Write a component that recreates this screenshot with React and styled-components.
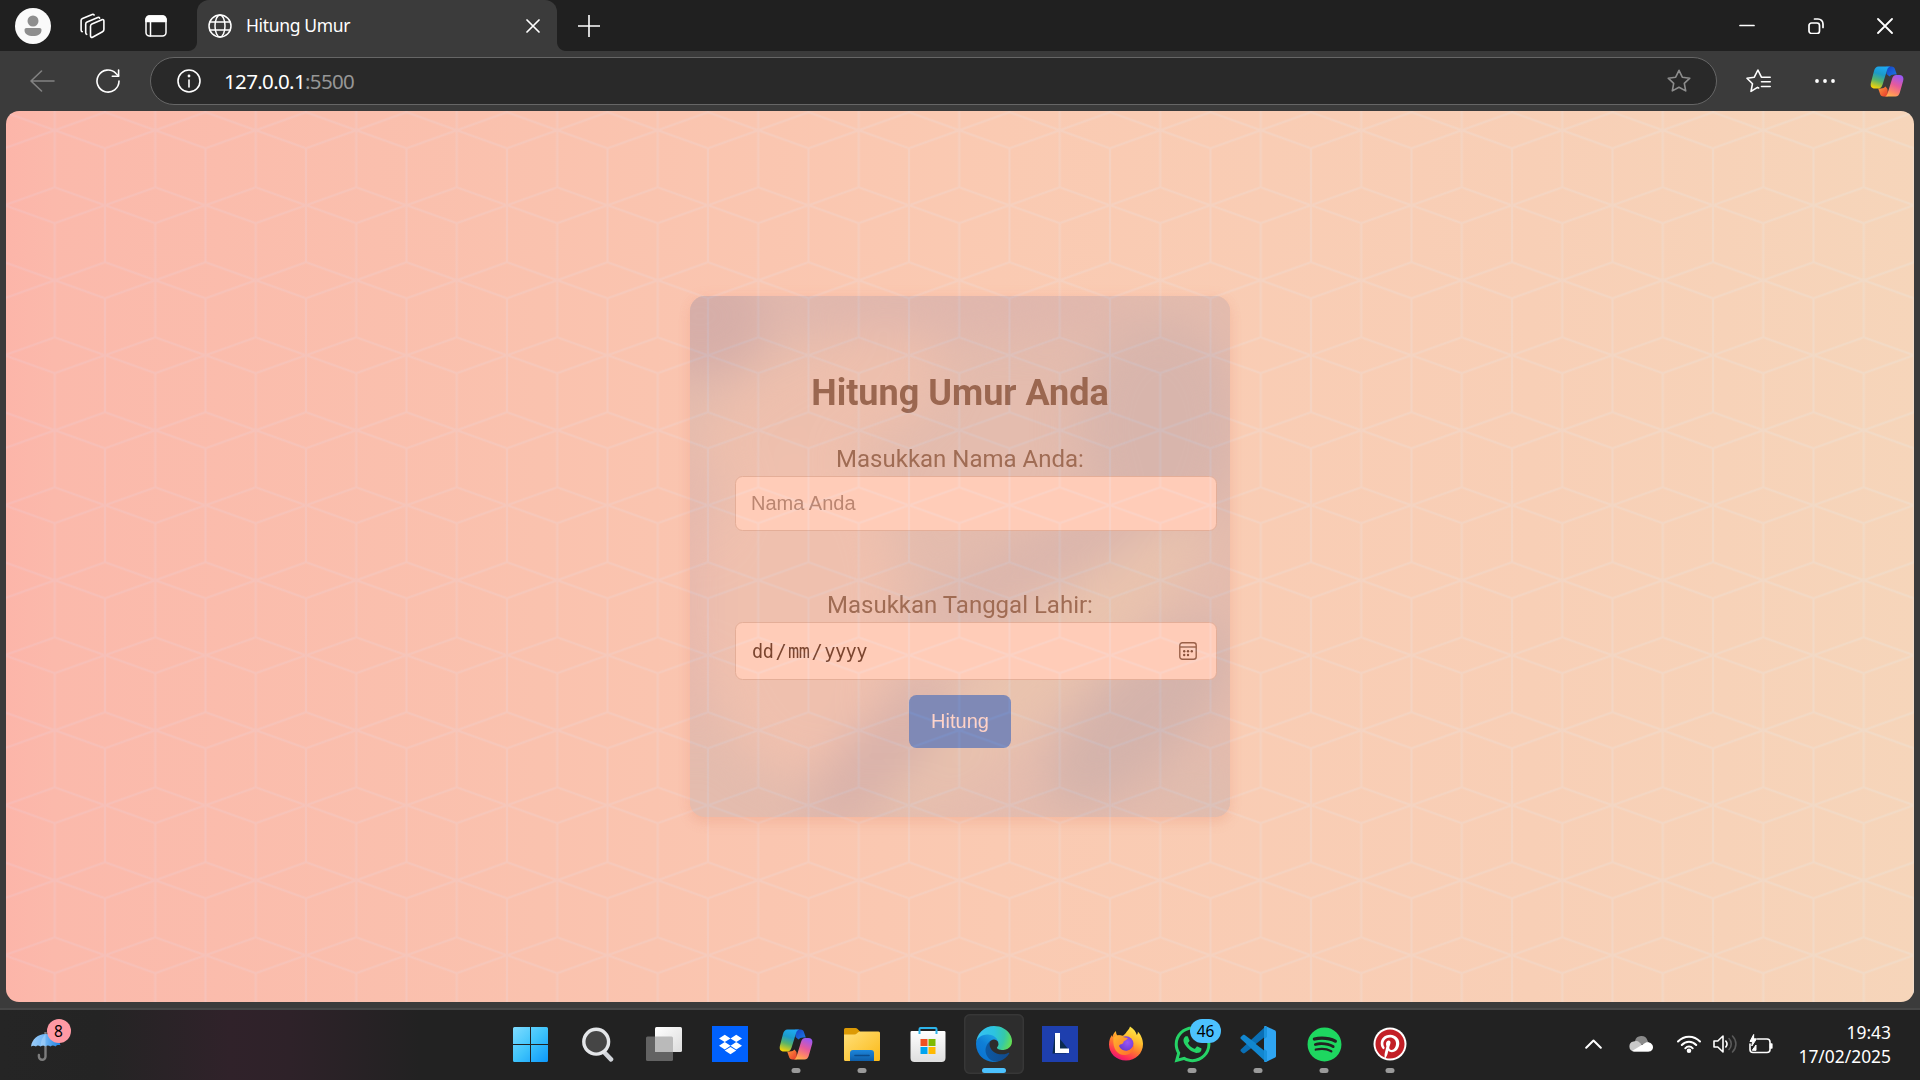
import React from "react";
import styled, { createGlobalStyle, css } from "styled-components";
import { FaDropbox, FaWhatsapp, FaSpotify, FaPinterest } from "react-icons/fa";

const GlobalStyle = createGlobalStyle`
  * { box-sizing: border-box; }
  html, body { margin: 0; padding: 0; overflow: hidden; background: #3b3b3b; }
  svg { display: block; flex: none; }
`;

const ui = `"Noto Sans", "Open Sans", sans-serif`;

const Desktop = styled.div`
  width: 1920px;
  height: 1080px;
  display: flex;
  flex-direction: column;
  background: #3b3b3b;
  font-family: ${ui};
  color: #fff;
`;

/* ---------- Browser chrome ---------- */

const TabBar = styled.div`
  height: 51px;
  display: flex;
  align-items: center;
  background: #202020;
`;

const Slot = styled.div`
  width: ${(p) => p.$w}px;
  height: 100%;
  padding-left: ${(p) => p.$pl || 0}px;
  flex: none;
  display: flex;
  align-items: center;
  justify-content: center;
`;

const Tab = styled.div`
  position: relative;
  width: 360px;
  height: 51px;
  padding: 0 17px 0 11px;
  display: flex;
  align-items: center;
  background: #3b3b3b;
  border-radius: 12px 12px 0 0;
  &::before, &::after {
    content: "";
    position: absolute;
    bottom: 0;
    width: 9px;
    height: 9px;
  }
  &::before { left: -9px; background: radial-gradient(circle at 0 0, #202020 8.5px, #3b3b3b 9.5px); }
  &::after { right: -9px; background: radial-gradient(circle at 100% 0, #202020 8.5px, #3b3b3b 9.5px); }
`;

const TabTitle = styled.span`
  flex: 1;
  margin-left: 14px;
  padding-bottom: 2px;
  font-size: 17.5px;
  line-height: 24px;
  letter-spacing: -0.35px;
`;

const WindowControls = styled.div`
  margin-left: auto;
  margin-right: 1px;
  height: 100%;
  display: flex;
`;

const Toolbar = styled.div`
  height: 60px;
  padding-left: 9px;
  display: flex;
  align-items: center;
`;

const AddressBar = styled.div`
  width: 1567px;
  height: 48px;
  margin-left: 9px;
  padding: 0 25px 0 26px;
  flex: none;
  display: flex;
  align-items: center;
  background: #292929;
  border: 1.5px solid #666;
  border-radius: 24px;
`;

const Url = styled.span`
  flex: 1;
  margin-left: 23px;
  font-size: 20.5px;
  line-height: 28px;
  letter-spacing: -0.65px;
  span { color: #969696; }
`;

/* ---------- Web page ---------- */

const Page = styled.main`
  position: relative;
  height: 891px;
  margin: 0 6px;
  display: flex;
  align-items: center;
  justify-content: center;
  overflow: hidden;
  isolation: isolate;
  border-radius: 13px;
  background: linear-gradient(90deg, #fcb5a9 0, #fbb9ab 2.5%, #fac2ae 28%, #facab2 52%, #f8cfb6 80%, #f6d5ba 100%);
`;

const Overlay = styled.svg`
  position: absolute;
  inset: 0;
  width: 100%;
  height: 100%;
  pointer-events: none;
  mix-blend-mode: ${(p) => p.$blend};
`;

const Card = styled.form`
  position: relative;
  isolation: isolate;
  width: 540px;
  height: 521px;
  padding: 76px 45px 0;
  display: flex;
  flex-direction: column;
  align-items: center;
  border-radius: 15px;
  background: #e4bcae;
  box-shadow: 0 6px 12px rgba(226, 140, 110, 0.22), 0 0 12px rgba(255, 165, 145, 0.14);
  font-family: Roboto, sans-serif;
  color: #9d6a52;
`;

const CardArt = styled.svg`
  position: absolute;
  inset: 0;
  z-index: -1;
  border-radius: 15px;
`;

const Heading = styled.h1`
  margin: 0 0 31px;
  font-size: 36px;
  line-height: 42px;
  font-weight: 700;
  color: #9b6750;
`;

const Label = styled.label`
  font-size: 24px;
  line-height: 28px;
  color: #a06c54;
`;

const field = css`
  align-self: flex-start;
  width: 482px;
  margin-right: -32px;
  padding: 0 15px;
  flex: none;
  background: #ffccb8;
  border: 1.5px solid #e4ae98;
  border-radius: 7.5px;
`;

const TextField = styled.input`
  ${field}
  height: 55px;
  margin-top: 3px;
  margin-bottom: 60px;
  font: 20px "Liberation Sans", Arial, sans-serif;
  outline: none;
  &::placeholder { color: #bb8671; opacity: 1; }
`;

const DateField = styled.div`
  ${field}
  height: 58px;
  margin-top: 3px;
  padding: 0 19px 0 16px;
  display: flex;
  align-items: center;
  justify-content: space-between;
  font: 18.6px "DejaVu Sans Mono", monospace;
  color: #7b452f;
`;

const DateParts = styled.span`
  display: flex;
  gap: 2px;
  letter-spacing: -0.5px;
`;

const Submit = styled.button`
  width: 102px;
  height: 53px;
  margin-top: 15px;
  padding: 0;
  flex: none;
  border: 0;
  border-radius: 7.5px;
  background: #7f89b6;
  color: #ffd2c6;
  font: 20px "Liberation Sans", Arial, sans-serif;
`;

const WindowEdge = styled.div`
  height: 8px;
  border-bottom: 2px solid #464646;
`;

/* ---------- Taskbar ---------- */

const Taskbar = styled.footer`
  height: 70px;
  padding-bottom: 2px;
  display: flex;
  align-items: center;
  background: linear-gradient(90deg, #252525 0, #242424 100px, #30222a 230px, #2e2229 290px, #222222 420px, #222222 100%);
`;

const Weather = styled.div`
  position: relative;
  width: 499px;
  height: 60px;
  padding: 18px 0 0 30px;
`;

const Badge = styled.span`
  position: absolute;
  left: ${(p) => p.$x}px;
  top: ${(p) => p.$y}px;
  width: ${(p) => p.$w}px;
  height: 24px;
  border-radius: 12px;
  background: ${(p) => p.$bg};
  color: #000;
  font-size: 15.5px;
  line-height: 24px;
  text-align: center;
`;

const Apps = styled.div`
  display: flex;
  gap: 6px;
  padding: 0 3px;
`;

const AppButton = styled.div`
  position: relative;
  width: 60px;
  height: 60px;
  padding-right: ${(p) => p.$nudge || 0}px;
  display: flex;
  align-items: center;
  justify-content: center;
  border-radius: 6px;
  ${(p) => p.$active && css`
    background: #2d2d2d;
    box-shadow: inset 0 0 0 1.5px #373737;
  `}
`;

const Running = styled.i`
  position: absolute;
  bottom: 1px;
  left: 50%;
  width: ${(p) => (p.$active ? 24 : 9)}px;
  height: 5px;
  transform: translateX(-50%);
  border-radius: 2.5px;
  background: ${(p) => (p.$active ? "#4cc2ff" : "#9a9a9a")};
`;

const LetterTile = styled.div`
  width: 36px;
  height: 36px;
  background: #1e3fae;
`;

const BlueTile = styled.div`
  width: 36px;
  height: 36px;
  display: flex;
  align-items: center;
  justify-content: center;
  background: #0061fe;
`;

const Tray = styled.div`
  margin-left: auto;
  padding-right: 29px;
  display: flex;
  align-items: center;
`;

const Clock = styled.div`
  width: 118px;
  font-size: 17.4px;
  line-height: 24px;
  text-align: right;
  white-space: nowrap;
`;

/* ---------- Icons ---------- */

const Line = ({ w = 24, h = w, sw = 1.6, color = "#fff", box, children }) => (
  <svg width={w} height={h} viewBox={box || `0 0 ${w} ${h}`} fill="none" stroke={color} strokeWidth={sw} strokeLinecap="round" strokeLinejoin="round">
    {children}
  </svg>
);

const Avatar = () => (
  <svg width="36" height="36" viewBox="0 0 36 36">
    <circle cx="18" cy="18" r="18" fill="#fafafa" />
    <circle cx="18" cy="13" r="5.5" fill="#8e8e8e" />
    <path d="M11.5 20h13c1.400 0 2 .8 2 2 0 4-3.500 6-8.500 6s-8.500-2-8.500-6c0-1.200.6-2 2-2z" fill="#8e8e8e" />
  </svg>
);

const Workspaces = () => (
  <Line w={26}>
    <path d="M10.500 13.200c0-1 .5-1.800 1.400-2.200l10-4.300c1-.4 2 .2 2 1.300v8.500c0 1-.5 1.700-1.400 2.200l-10 5.500c-1 .5-2-.1-2-1.200z" />
    <path d="M6.700 21.300c-.8-.3-1-1-1-1.800v-8.500c0-1 .5-1.700 1.400-2.100l10.700-4.500c.8-.3 1.500 0 1.800.7" />
    <path d="M2.200 18.700c-.8-.4-1.100-1-1.100-1.800V7.500c0-1 .4-1.700 1.400-2.100l9.700-4c.8-.3 1.500 0 1.900.6" />
  </Line>
);

const VerticalTabs = () => (
  <Line w={22} sw={1.5}>
    <rect x="1" y="1" width="20" height="20" rx="3.500" />
    <path d="M1 6.500V4.500A3.500 3.500 0 0 1 4.500 1h13A3.500 3.500 0 0 1 21 4.500v2z" fill="#fff" />
    <path d="M5.500 7v14" />
  </Line>
);

const Globe = () => (
  <Line w={24} sw={1.5}>
    <circle cx="12" cy="12" r="11" />
    <ellipse cx="12" cy="12" rx="5" ry="11" />
    <path d="M2 8h20M2 16h20" />
  </Line>
);

const starPath = "M12 1.300l3.300 6.900 7.500 1-5.500 5.200 1.400 7.500L12 18.300l-6.700 3.600 1.400-7.500L1.200 9.200l7.500-1z";

const Favorites = () => (
  <Line w={25} h={24}>
    <path d="M12.600 19l-1.100-.6-6.500 4 1.500-7.700L1 9.300l7.300-1.100L11.900 1l3.500 7.200M15.500 8.300h8.700M15.500 12.800h8.700M15.500 17.500h8.700" />
  </Line>
);

const Copilot = ({ id }) => (
  <svg width="34" height="31" viewBox="0 0 34 31">
    <defs>
      <linearGradient id={`${id}a`} x1=".6" y1="0" x2=".3" y2="1">
        <stop offset="0" stopColor="#1ea9f2" /><stop offset=".35" stopColor="#1c9bc9" />
        <stop offset=".65" stopColor="#58b46b" /><stop offset="1" stopColor="#f5d308" />
      </linearGradient>
      <linearGradient id={`${id}b`} x1=".7" y1="0" x2=".3" y2="1">
        <stop offset="0" stopColor="#9a58f5" /><stop offset=".45" stopColor="#e65a9c" />
        <stop offset=".8" stopColor="#ff8a64" /><stop offset="1" stopColor="#ffb04e" />
      </linearGradient>
      <linearGradient id={`${id}c`} x1="0" y1="0" x2="1" y2="1">
        <stop offset="0" stopColor="#1740c4" /><stop offset="1" stopColor="#1d7be6" />
      </linearGradient>
      <linearGradient id={`${id}d`} x1="0" y1="0" x2="1" y2="1">
        <stop offset="0" stopColor="#ff9a3c" /><stop offset="1" stopColor="#e8372c" />
      </linearGradient>
    </defs>
    <path d="M16 .5h5.500c2 0 3 1 3.500 2.800l1.800 5.200h-2.500c-2.500 0-3.700.9-4.800 2L16.500 8z" fill={`url(#${id}c)`} />
    <path d="M18 30.500h-4.500c-2 0-3-1-3.500-2.800L8.200 22.500h2.500c2.500 0 3.700-.9 4.800-2L17.500 23z" fill={`url(#${id}d)`} />
    <path d="M8.500.5H20.500c-2 .3-2.900 1.800-3.500 3.700l-4.400 14.300c-.8 2.600-2 4-4.400 4H4.800c-3.400 0-4.800-2.200-3.800-6L4 5C4.800 2 6.300.5 8.500.5z" fill={`url(#${id}a)`} />
    <path d="M25.500 30.500H14.500c1.700-.3 2.600-1.700 3.200-3.600l4.300-14c.8-2.600 2.100-4 4.300-4h3c3.400 0 4.800 2.200 3.800 6L30 26c-.8 3-2.300 4.500-4.500 4.500z" fill={`url(#${id}b)`} />
  </svg>
);

const CalendarIcon = () => (
  <svg width="18" height="18" viewBox="0 0 18 18" fill="none" stroke="#9a6048" strokeWidth="1.400">
    <rect x=".8" y=".8" width="16.400" height="16.400" rx="2.500" />
    <path d="M1 5h16" />
    <g fill="#8a513b" stroke="none">
      <circle cx="5.200" cy="9.300" r="1.200" /><circle cx="9" cy="9.300" r="1.200" /><circle cx="12.800" cy="9.300" r="1.200" />
      <circle cx="5.200" cy="13" r="1.200" /><circle cx="9" cy="13" r="1.200" />
    </g>
  </svg>
);

const Umbrella = () => (
  <svg width="32" height="30" viewBox="0 0 32 30">
    <defs>
      <linearGradient id="umb" x1="0" y1="0" x2="1" y2="0">
        <stop offset="0" stopColor="#9ccdf8" /><stop offset=".5" stopColor="#6db3f3" /><stop offset="1" stopColor="#1d7fe0" />
      </linearGradient>
    </defs>
    <path d="M15.500 0v24.500a3.300 3.300 0 0 1-6.600 0v-1.500" fill="none" stroke="#7d7d7d" strokeWidth="2.400" strokeLinecap="round" />
    <path d="M1 14.500C2 7 8 2 15.500 2S29.500 7 30.500 13.500c-1.500-.8-3.500-.6-5 1-2-1.500-3.500-1.500-5 0-2-1.500-3.500-1.300-5 0-1.500-1.300-3-1.500-5 0-2-1.300-3.500-1.300-4.500 0-2-1.200-3.500-1-5 0z" fill="url(#umb)" />
    <path d="M15.500 2c-3 3-5 7-5 12.500 2-1.500 3.500-1.300 5 0z" fill="#b5dafb" opacity=".5" />
  </svg>
);

const Start = () => (
  <svg width="35" height="35" viewBox="0 0 35 35">
    <defs>
      <linearGradient id="win" gradientUnits="userSpaceOnUse" x1="0" y1="0" x2="35" y2="35">
        <stop offset="0" stopColor="#7fdcff" /><stop offset=".5" stopColor="#3fc4fb" /><stop offset="1" stopColor="#0c98fb" />
      </linearGradient>
    </defs>
    <path fill="url(#win)" d="M1.500 0H17v17H0V1.500A1.500 1.500 0 0 1 1.500 0zM18 0h15.500A1.500 1.500 0 0 1 35 1.500V17H18zM0 18h17v17H1.500A1.500 1.500 0 0 1 0 33.500zM18 18h17v15.500a1.500 1.500 0 0 1-1.500 1.500H18z" />
  </svg>
);

const Search = () => (
  <svg width="34" height="35" viewBox="0 0 34 35">
    <path d="M22 24l8 8.300" stroke="#d2d5da" strokeWidth="4.600" strokeLinecap="round" />
    <circle cx="15.200" cy="14.700" r="12.400" fill="#454545" stroke="#e4e6e9" strokeWidth="3.400" />
  </svg>
);

const TaskView = () => (
  <svg width="36" height="34" viewBox="0 0 36 34">
    <defs>
      <linearGradient id="tv" x1="0" y1="0" x2="1" y2="1"><stop offset="0" stopColor="#fff" /><stop offset="1" stopColor="#dcdcdc" /></linearGradient>
    </defs>
    <rect x="0" y="9.500" width="27" height="24.500" rx="1.500" fill="#636363" />
    <rect x="9" y="0" width="27" height="25" rx="1.500" fill="url(#tv)" />
    <path d="M9 9.500h16.500a1.500 1.500 0 0 1 1.500 1.500v14H10.500A1.500 1.500 0 0 1 9 23.500z" fill="#bababa" />
  </svg>
);

const Folder = () => (
  <svg width="36" height="33" viewBox="0 0 36 33">
    <defs>
      <linearGradient id="fl" x1="0" y1="0" x2="1" y2="1"><stop offset="0" stopColor="#ffe07a" /><stop offset="1" stopColor="#fbb917" /></linearGradient>
      <linearGradient id="fb" x1="0" y1="0" x2="0" y2="1"><stop offset="0" stopColor="#1c86dc" /><stop offset="1" stopColor="#0f5ea8" /></linearGradient>
    </defs>
    <path d="M1.500 0h10c.8 0 1.300.2 1.800.7L16 3.500V8H0V1.500A1.500 1.500 0 0 1 1.500 0z" fill="#dc9a05" />
    <path d="M0 6.500h10.500c1 0 1.700-.3 2.300-.9l1.400-1.400c.6-.6 1.200-.8 2-.8h18.300A1.500 1.500 0 0 1 36 4.900v26.600a1.500 1.500 0 0 1-1.500 1.500h-33A1.500 1.500 0 0 1 0 31.500z" fill="url(#fl)" />
    <path d="M6 33v-8a3 3 0 0 1 3-3h18a3 3 0 0 1 3 3v8z" fill="url(#fb)" />
    <path d="M11 27.500h14" stroke="#0c4c8b" strokeWidth="1.600" strokeLinecap="round" />
  </svg>
);

const Store = () => (
  <svg width="36" height="36" viewBox="0 0 36 36">
    <defs><linearGradient id="st" x1="0" y1="0" x2="0" y2="1"><stop offset="0" stopColor="#fff" /><stop offset="1" stopColor="#dedede" /></linearGradient></defs>
    <path d="M1.800 5h32.400a1.300 1.300 0 0 1 1.300 1.300V32a4 4 0 0 1-4 4h-27a4 4 0 0 1-4-4V6.300A1.300 1.300 0 0 1 1.800 5z" fill="url(#st)" />
    <path d="M9.500 8V3a1 1 0 0 1 1-1h15a1 1 0 0 1 1 1v5" fill="none" stroke="#2db4ea" strokeWidth="2" />
    <path d="M10.500 13h7v7h-7z" fill="#f25022" /><path d="M18.500 13h7v7h-7z" fill="#7fba00" />
    <path d="M10.500 21h7v7h-7z" fill="#00a4ef" /><path d="M18.500 21h7v7h-7z" fill="#ffb900" />
  </svg>
);

const Edge = () => (
  <svg width="36" height="36" viewBox="0 0 256 256">
    <defs>
      <linearGradient id="e1" gradientUnits="userSpaceOnUse" x1="58" y1="177" x2="232" y2="177"><stop offset="0" stopColor="#0c59a4" /><stop offset="1" stopColor="#114a8b" /></linearGradient>
      <linearGradient id="e2" gradientUnits="userSpaceOnUse" x1="140" y1="90" x2="45" y2="215"><stop offset="0" stopColor="#1b9de2" /><stop offset=".5" stopColor="#0f7ed6" /><stop offset="1" stopColor="#0b76d2" /></linearGradient>
      <radialGradient id="e3" gradientUnits="userSpaceOnUse" cx="24" cy="50" r="240"><stop offset="0" stopColor="#35c1f1" /><stop offset=".45" stopColor="#2cc3df" /><stop offset=".75" stopColor="#36c9a8" /><stop offset="1" stopColor="#66e04f" /></radialGradient>
    </defs>
    <path fill="url(#e1)" d="M231 190.500c-3.400 1.800-6.900 3.400-10.500 4.700a101.900 101.900 0 0 1-35.900 6.500c-47.300 0-88.500-32.500-88.500-74.300a31.500 31.500 0 0 1 16.400-27.300c-42.800 1.800-53.800 46.400-53.800 72.500 0 73.900 68.100 81.400 82.800 81.400 7.900 0 19.800-2.300 27-4.600l1.300-.4a128.300 128.300 0 0 0 66.600-52.800 4 4 0 0 0-5.400-5.700z" />
    <path fill="url(#e2)" d="M105.700 241.400a79.200 79.200 0 0 1-22.700-21.300 80.700 80.700 0 0 1 29.500-120c3.200-1.500 8.500-4.200 15.600-4.100a32.400 32.400 0 0 1 25.700 13 31.900 31.900 0 0 1 6.300 18.700c0-.2 24.500-79.600-80-79.600-43.900 0-80 41.700-80 78.200a130.200 130.200 0 0 0 12.100 56 128 128 0 0 0 156.400 67 75.500 75.500 0 0 1-62.800-8z" />
    <path fill="url(#e3)" d="M152.300 148.900c-.8 1-3.300 2.500-3.300 5.700 0 2.600 1.700 5.100 4.700 7.200 14.400 10 41.500 8.700 41.600 8.700a59.600 59.600 0 0 0 30.300-8.300 61.400 61.400 0 0 0 30.400-52.900c.3-22.400-8-37.300-11.300-43.900C223.500 23.900 177.700 0 128 0A128 128 0 0 0 0 126.200c.5-36.500 36.800-66 80-66 3.500 0 23.500.3 42 10 16.300 8.600 24.900 18.900 30.800 29.200 6.200 10.700 7.300 24.100 7.300 29.500 0 5.300-2.700 13.300-7.800 20z" />
  </svg>
);

const LApp = () => (
  <LetterTile>
    <svg width="36" height="36" viewBox="0 0 36 36">
      <path d="M13 7l-2.500 20.500h13.500l3-3.500z" fill="#0b2b4f" />
      <path d="M13 7h5v15.500h9V27H13z" fill="#fff" />
    </svg>
  </LetterTile>
);

const Firefox = () => (
  <svg width="36" height="36" viewBox="0 0 36 36">
    <defs>
      <linearGradient id="ff" x1=".8" y1="0" x2=".3" y2="1">
        <stop offset="0" stopColor="#fff04f" /><stop offset=".35" stopColor="#ffbd2e" /><stop offset=".6" stopColor="#ff7a30" /><stop offset=".85" stopColor="#ff2f55" /><stop offset="1" stopColor="#e3127a" />
      </linearGradient>
      <radialGradient id="fp" cx=".6" cy=".4" r=".7"><stop offset="0" stopColor="#9b55f7" /><stop offset="1" stopColor="#6437c8" /></radialGradient>
      <linearGradient id="fo" x1="0" y1="0" x2="1" y2="1"><stop offset="0" stopColor="#ffb52e" /><stop offset="1" stopColor="#ff6a2b" /></linearGradient>
    </defs>
    <path d="M22 .5c4 2.500 6 5.500 6.800 8.500.8-.7 1.200-2 1-3.500 3 3 5.200 8 5.200 12.500 0 9.500-7.500 16.500-17 16.500S1 27.500 1 18.500c0-4.500 1.500-7.500 3-9.500 0 1 .1 1.600.4 2C5 8.500 6 6.500 8 5c0 2 .5 3.500 1.500 4.500 2-.5 4-.4 5.500.3C17 8.500 18.500 6 19.500 4.800 20.500 3.500 21.500 2.500 22 .5z" fill="url(#ff)" />
    <circle cx="18" cy="17.800" r="7.500" fill="url(#fp)" />
    <path d="M5.500 11.500c3-2.200 6.500-2.500 9.200-.8 1.500.9 2.800 1 5 1.200-.3 2-3.700 2.600-4.200 4-.3 2-1.800 2-3.400 2.600-1.500.5-1.300 2.500 1 4.500 2 1.600 4.300 2 6.500 1.500 3-.7 5.500-3 6-6.500 1.500 4-1 10-8 11-7 .8-13.500-5-12.100-17.500z" fill="url(#fo)" />
  </svg>
);

const VsCode = () => (
  <svg width="36" height="36" viewBox="0 0 36 36">
    <path d="M26 0L1 23.200c-.7.6-.7 1.600 0 2.300l1.700 1.500c.6.6 1.500.6 2.100.1L26 11z" fill="#0a6fb5" />
    <path d="M26 36L1 13c-.7-.6-.7-1.600 0-2.300l1.700-1.500c.6-.5 1.500-.6 2.100-.1L26 25z" fill="#1287d0" />
    <path d="M26 36c-.8.100-1.500-.2-2-.7V.7c.5-.5 1.200-.8 2-.5l8.700 4.100c.8.400 1.300 1.200 1.300 2v23.500c0 .9-.5 1.600-1.300 2z" fill="#2fa5f2" />
    <path d="M24 .7l3 0V11L24 13.300zM24 22.800L27 25v10.600l-3-.3z" fill="#1a93de" />
    <path d="M24 11.500v13L15.800 18z" fill="#222" />
  </svg>
);

const Pinterest = () => (
  <svg width="34" height="34" viewBox="0 0 34 34">
    <circle cx="17" cy="17" r="16.500" fill="#fff" />
    <FaPinterest x="2" y="2" size={30} color="#c31f26" />
  </svg>
);

const Cloud = () => (
  <svg width="24" height="16" viewBox="0 0 24 16">
    <path d="M6 5a6.500 6.500 0 0 1 12.500-.5L20 8H6z" fill="#8a8a8a" />
    <path d="M5 15.500A5 5 0 0 1 4.500 5.600c2-.9 4.500-.6 6 1L20 15.500z" fill="#c9c9c9" />
    <path d="M3 15l13.500-8.200c3.500-1.500 7.500 1 7.500 4.700 0 2.200-1.800 4-4 4H5z" fill="#fff" />
  </svg>
);

const Wifi = () => (
  <Line w={24} h={18} sw={2}>
    <path d="M1 6.500c6-6.500 16-6.500 22 0M4.800 10c4-4.300 10.400-4.300 14.400 0M8.300 13.300c2-2.300 5.400-2.300 7.400 0" />
    <circle cx="12" cy="15.700" r="1.300" fill="#fff" />
  </Line>
);

const Volume = () => (
  <Line w={24} h={20} sw={1.6}>
    <path d="M1 7h3.800L10 2v16l-5.200-5H1z" />
    <path d="M12.800 7c1.400 1.700 1.400 4.300 0 6" />
    <path d="M16 4.500c3 3 3 8 0 11M19.500 2c4.500 4.500 4.500 11.500 0 16" stroke="#5a5a5a" />
  </Line>
);

const Battery = () => (
  <Line w={24} h={20} sw={1.6}>
    <path d="M8.500 5H18a3 3 0 0 1 3 3v7.500a3 3 0 0 1-3 3H4a3 3 0 0 1-3-3V10" />
    <path d="M21.500 10v4h1.300v-4z" fill="#fff" />
    <path d="M3.500 16l3.500-5v5z" fill="#fff" strokeWidth="1" />
    <path d="M4.500.8L1 7.500h2.500L2.800 12 7.500 4.800H5z" fill="#fff" strokeWidth="1" />
  </Line>
);

const apps = [
  { name: "start", icon: <Start />, nudge: 3 },
  { name: "search", icon: <Search /> },
  { name: "taskview", icon: <TaskView /> },
  { name: "dropbox", icon: <BlueTile><FaDropbox size={23} color="#fff" /></BlueTile> },
  { name: "copilot", icon: <Copilot id="tb" />, running: true },
  { name: "files", icon: <Folder />, running: true },
  { name: "store", icon: <Store /> },
  { name: "edge", icon: <Edge />, running: true, active: true },
  { name: "l", icon: <LApp /> },
  { name: "firefox", icon: <Firefox /> },
  { name: "whatsapp", icon: <FaWhatsapp size={41} color="#25d366" />, running: true, badge: "46" },
  { name: "vscode", icon: <VsCode />, running: true },
  { name: "spotify", icon: <FaSpotify size={35} color="#1ed760" />, running: true },
  { name: "pinterest", icon: <Pinterest />, running: true },
];

const CubePattern = ({ id, color, blend }) => (
  <Overlay $blend={blend}>
    <defs>
      <pattern id={id} width="100.500" height="150" patternUnits="userSpaceOnUse" patternTransform="translate(-1.500 -55.700)">
        <path
          d="M0 0L50.250 -18L100.500 0L50.250 18ZM0 150L50.250 132L100.500 150L50.250 168ZM50.250 75L0 57M50.250 75L0 93M50.250 75L100.500 57M50.250 75L100.500 93M50.250 18V132M0 0V57M0 93V150M100.500 0V57M100.500 93V150"
          fill="none"
          stroke={color}
          strokeWidth="2"
        />
      </pattern>
    </defs>
    <rect width="100%" height="100%" fill={`url(#${id})`} />
  </Overlay>
);

const CardTexture = () => (
  <CardArt width="540" height="521" viewBox="0 0 540 521">
    <defs>
      <filter id="soft" x="-50%" y="-50%" width="200%" height="200%" colorInterpolationFilters="sRGB"><feGaussianBlur stdDeviation="22" /></filter>
    </defs>
    <rect width="540" height="521" fill="#e4bcae" />
    <g filter="url(#soft)">
      <ellipse cx="10" cy="20" rx="70" ry="60" fill="#d6aea8" />
      <ellipse cx="250" cy="10" rx="190" ry="30" fill="#dfb6ad" />
      <ellipse cx="130" cy="110" rx="130" ry="60" fill="#edbfad" transform="rotate(-25 130 110)" />
      <ellipse cx="110" cy="310" rx="100" ry="170" fill="#efc0ae" />
      <ellipse cx="-5" cy="300" rx="20" ry="150" fill="#e6b7ad" />
      <ellipse cx="470" cy="130" rx="80" ry="110" fill="#d8b5ac" />
      <ellipse cx="430" cy="235" rx="110" ry="34" fill="#dab5ac" transform="rotate(-20 430 235)" />
      <ellipse cx="330" cy="275" rx="110" ry="24" fill="#dab5ac" transform="rotate(-30 330 275)" />
      <ellipse cx="350" cy="370" rx="220" ry="42" fill="#e9c3ae" transform="rotate(-42 350 370)" />
      <ellipse cx="190" cy="460" rx="95" ry="34" fill="#d9b2aa" transform="rotate(-45 190 460)" />
      <ellipse cx="300" cy="490" rx="90" ry="26" fill="#e5bcae" transform="rotate(-30 300 490)" />
      <ellipse cx="450" cy="420" rx="120" ry="50" fill="#d4b3ab" transform="rotate(-45 450 420)" />
      <ellipse cx="520" cy="505" rx="50" ry="30" fill="#dfbcae" />
    </g>
  </CardArt>
);

export default function App() {
  return (
    <Desktop>
      <GlobalStyle />
      <TabBar>
        <Slot $w={66}><Avatar /></Slot>
        <Slot $w={54}><Workspaces /></Slot>
        <Slot $w={72}><VerticalTabs /></Slot>
        <Slot $w={5} />
        <Tab>
          <Globe />
          <TabTitle>Hitung Umur</TabTitle>
          <Line w={14} sw={1.7}><path d="M1 1l12 12M13 1L1 13" /></Line>
        </Tab>
        <Slot $w={63}><Line w={22} sw={1.6}><path d="M11 0v22M0 11h22" /></Line></Slot>
        <WindowControls>
          <Slot $w={69}><Line w={16} h={4} sw={1.7}><path d="M1 1.500h14" /></Line></Slot>
          <Slot $w={69}>
            <Line w={16} sw={1.7}>
              <rect x="1" y="5" width="10.500" height="10.500" rx="2.500" />
              <path d="M6.500 1H10a5 5 0 0 1 5 5v3.500" />
            </Line>
          </Slot>
          <Slot $w={69}><Line w={16} sw={1.8}><path d="M1 1l14 14M15 1L1 15" /></Line></Slot>
        </WindowControls>
      </TabBar>

      <Toolbar>
        <Slot $w={66}><Line w={25} h={22} color="#828282" sw={1.6}><path d="M24 11H1M11.500 1L1 11l10.500 10" /></Line></Slot>
        <Slot $w={66}>
          <Line w={24} sw={1.6}>
            <path d="M23 12A11 11 0 1 1 20 4.500L22.500 7" />
            <path d="M22.600 1v6.300h-6.300" />
          </Line>
        </Slot>
        <AddressBar>
          <Line w={24} sw={1.6}>
            <circle cx="12" cy="12" r="11" />
            <path d="M12 11v7" />
            <circle cx="12" cy="7" r=".6" fill="#fff" />
          </Line>
          <Url>127.0.0.1<span>:5500</span></Url>
          <Line w={24} sw={1.6} color="#8d8d8d"><path d={starPath} /></Line>
        </AddressBar>
        <Slot $w={81} $pl={1}><Favorites /></Slot>
        <Slot $w={53}>
          <svg width="20" height="4" viewBox="0 0 20 4" fill="#fff"><circle cx="2" cy="2" r="1.900" /><circle cx="10" cy="2" r="1.900" /><circle cx="18" cy="2" r="1.900" /></svg>
        </Slot>
        <Slot $w={69} $pl={3}><Copilot id="nav" /></Slot>
      </Toolbar>

      <Page>
        <Card>
          <CardTexture />
          <Heading>Hitung Umur Anda</Heading>
          <Label htmlFor="nama">Masukkan Nama Anda:</Label>
          <TextField id="nama" placeholder="Nama Anda" />
          <Label>Masukkan Tanggal Lahir:</Label>
          <DateField>
            <DateParts><span>dd</span><span>/</span><span>mm</span><span>/</span><span>yyyy</span></DateParts>
            <CalendarIcon />
          </DateField>
          <Submit type="button">Hitung</Submit>
        </Card>
        <CubePattern id="cubeTint" color="#fbffff" blend="multiply" />
        <CubePattern id="cubeGlow" color="#00060d" blend="plus-lighter" />
      </Page>
      <WindowEdge />

      <Taskbar>
        <Weather>
          <Umbrella />
          <Badge $x={46.5} $y={4.5} $w={24} $bg="#ff99a4">8</Badge>
        </Weather>
        <Apps>
          {apps.map((a) => (
            <AppButton key={a.name} $active={a.active} $nudge={a.nudge}>
              {a.icon}
              {a.running && <Running $active={a.active} />}
              {a.badge && <Badge $x={28} $y={5} $w={31} $bg="#4cc2ff">{a.badge}</Badge>}
            </AppButton>
          ))}
        </Apps>
        <Tray>
          <Slot $w={72}><Line w={17} h={10} sw={2}><path d="M1.200 8.800l7.300-7.300 7.300 7.300" /></Line></Slot>
          <Slot $w={24}><Cloud /></Slot>
          <Slot $w={60} $pl={12}><Wifi /></Slot>
          <Volume />
          <Slot $w={12} />
          <Battery />
          <Clock>19:43<br />17/02/2025</Clock>
        </Tray>
      </Taskbar>
    </Desktop>
  );
}
